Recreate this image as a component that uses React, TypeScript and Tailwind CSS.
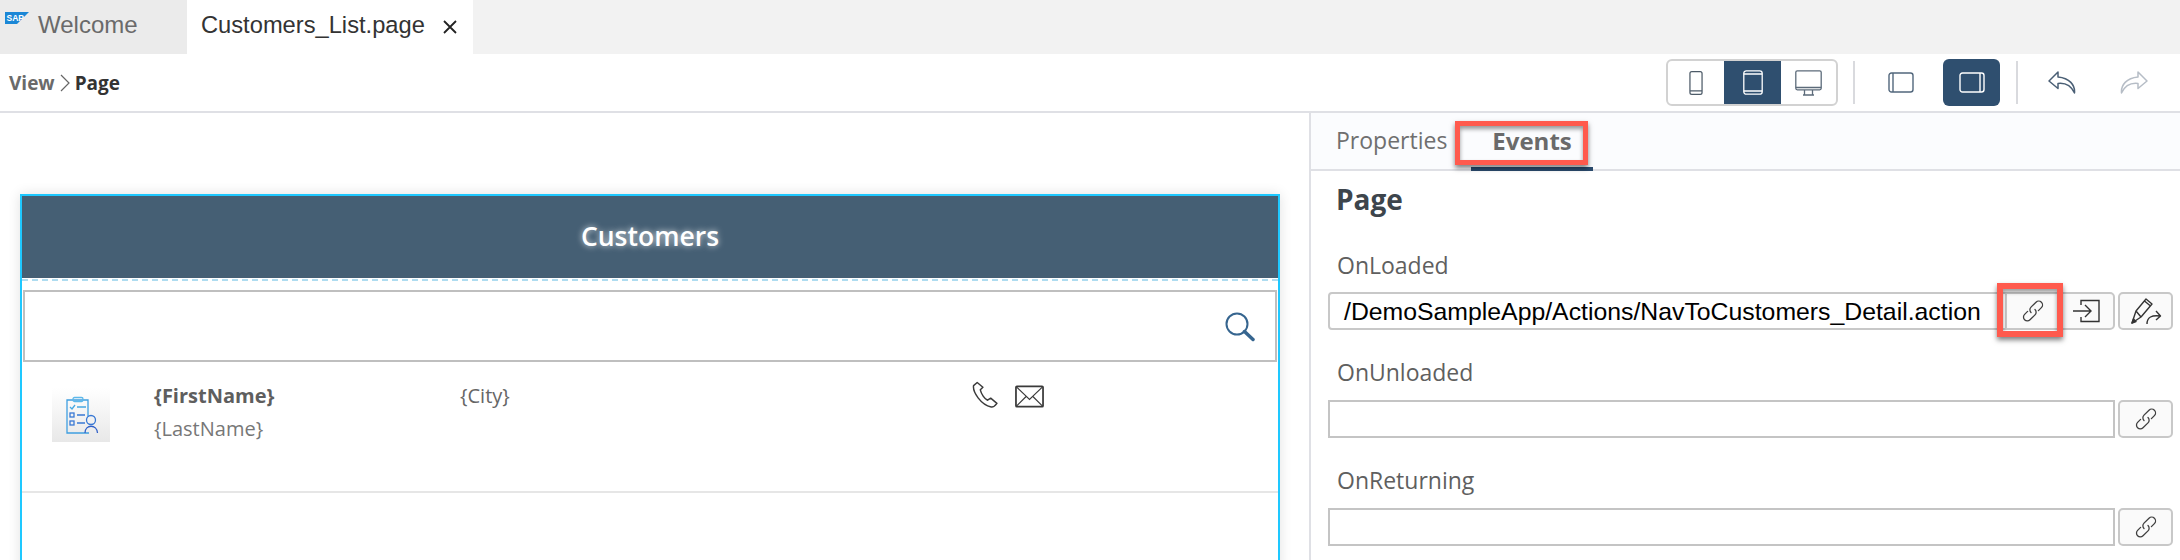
const navy = '#2f4f6f'

function Phone() {
  return (
    <svg viewBox="0 0 13 23" className="w-[14px] h-[24px]" fill="none" stroke="#4d5b68" strokeWidth="1.200" strokeLinejoin="round">
      <rect x="0.700" y="0.700" width="11.600" height="21.600" rx="1.800" />
      <path d="M0.700 19h11.600" />
    </svg>
  )
}

function Tablet() {
  return (
    <svg viewBox="0 0 20 25" className="w-[20px] h-[25px]" fill="none" stroke="#fff" strokeWidth="1.300" strokeLinejoin="round">
      <rect x="0.800" y="0.800" width="18.400" height="23.400" rx="2.500" />
      <path d="M0.800 4h18.400M0.800 21h18.400" />
    </svg>
  )
}

function Desktop() {
  return (
    <svg viewBox="0 0 27 26" className="w-[27px] h-[26px]" fill="none" stroke="#5c6b7a" strokeWidth="1.300" strokeLinejoin="round">
      <rect x="0.800" y="0.800" width="25.400" height="19" rx="1.500" />
      <path d="M0.800 17.500h25.400M9.500 20v5h8v-5M8 25h11" />
    </svg>
  )
}

function PanelIcon({ side, color }: { side: 'left' | 'right'; color: string }) {
  return (
    <svg viewBox="0 0 26 21" className="w-[26px] h-[21px]" fill="none" stroke={color} strokeWidth="1.400">
      <rect x="1" y="1" width="24" height="19" rx="2.500" />
      {side === 'left' ? <path d="M5 1v19" /> : <path d="M21 1v19" />}
    </svg>
  )
}

function Arrow({ flip, color }: { flip?: boolean; color: string }) {
  return (
    <svg viewBox="0 0 28 23" className={flip ? 'w-[28px] h-[23px] -scale-x-100' : 'w-[28px] h-[23px]'} fill="none" stroke={color} strokeWidth="1.500" strokeLinejoin="round">
      <path d="M10 1 1 10l9 7.500v-5c7-.8 13 2 16.500 9.500 .7-8-5-15-16.500-16z" />
    </svg>
  )
}

function Link() {
  return (
    <svg viewBox="0 0 26 26" className="w-[26px] h-[26px]" fill="none" stroke="#3f3f3f" strokeWidth="1.300" strokeLinecap="round">
      <path d="M11 14.500a3.800 3.800 0 0 1 0-5.400L16 4.200a3.800 3.800 0 0 1 5.400 5.400l-3 3" />
      <path d="M15 11.500a3.800 3.800 0 0 1 0 5.400L10 21.800a3.800 3.800 0 0 1-5.400-5.400l3-3" />
    </svg>
  )
}

function LinkButton({ className }: { className: string }) {
  return (
    <div className={`flex items-center justify-center h-[38px] border-2 border-[#c8c8c8] bg-[#fafafa] ${className}`}>
      <Link />
    </div>
  )
}

function EmptyField({ label }: { label: string }) {
  return (
    <div className="mt-[28px]">
      <div className="pl-[9px] text-[23px] leading-[28px] text-[#5f5f5f] mb-[14px]">{label}</div>
      <div className="flex gap-[3px] pr-[7px]">
        <div className="flex-1 h-[38px] border-2 border-[#c4c4c4] bg-white" />
        <LinkButton className="w-[55px] rounded-[5px]" />
      </div>
    </div>
  )
}

export default function App() {
  return (
    <div className="relative w-[2180px] h-[560px] overflow-hidden bg-white flex flex-col font-['Open_Sans',sans-serif]">
      {/* Tabs */}
      <div className="flex h-[54px] shrink-0 bg-[#f2f2f2] font-['Liberation_Sans',sans-serif] text-[24px]">
        <div className="relative w-[187px] bg-[#ebebeb] pl-[38px] pt-[7px] text-[#6a6a6a]">
          <svg viewBox="0 0 24 12" className="absolute left-[5px] top-[12px] w-[24px] h-[12px]">
            <path d="M0 0h24L12 12H0z" fill="#1b87d6" />
            <text x="1.500" y="9" fontSize="8.500" fontWeight="700" fill="#fff" fontFamily="Liberation Sans">SAP</text>
          </svg>
          Welcome
        </div>
        <div className="flex w-[286px] bg-white pl-[14px] pt-[8px] text-[23.700px] text-[#333]">
          <span>Customers_List.page</span>
          <svg viewBox="0 0 14 14" className="w-[14px] h-[14px] ml-[18px] mt-[12px]" stroke="#222" strokeWidth="1.800">
            <path d="M1 1l12 12M13 1 1 13" />
          </svg>
        </div>
      </div>

      {/* Toolbar */}
      <div className="flex items-center h-[59px] shrink-0 border-b-2 border-[#dfe0e5] pl-[9px]">
        <div className="flex items-center mt-[1px] text-[19px] font-bold text-[#6a6a6a]">
          View
          <svg viewBox="0 0 10 18" className="w-[10px] h-[18px] mx-[5px]" fill="none" stroke="#666" strokeWidth="1.200"><path d="m1 1 8 8-8 8" /></svg>
          <span className="text-[#333]">Page</span>
        </div>
        <div className="flex items-center ml-auto">
          <div className="flex h-[47px] rounded-[6px] border-2 border-[#d2d2d2] overflow-hidden">
            <div className="flex items-center justify-center w-[56px]"><Phone /></div>
            <div className="flex items-center justify-center w-[57px] bg-[#2f4f6f]"><Tablet /></div>
            <div className="flex items-center justify-center w-[55px]"><Desktop /></div>
          </div>
          <div className="w-[2px] h-[43px] bg-[#d9dade] ml-[15px]" />
          <div className="flex items-center justify-center w-[57px] h-[47px] ml-[17px]"><PanelIcon side="left" color="#52677c" /></div>
          <div className="flex items-center justify-center w-[57px] h-[47px] ml-[14px] rounded-[6px]" style={{ backgroundColor: navy }}><PanelIcon side="right" color="#fff" /></div>
          <div className="w-[2px] h-[43px] bg-[#d9dade] ml-[16px]" />
          <div className="ml-[30px]"><Arrow color="#4a5f75" /></div>
          <div className="ml-[44px] mr-[32px]"><Arrow flip color="#b6bdc6" /></div>
        </div>
      </div>

      <div className="flex flex-1 min-h-0">
        {/* Canvas */}
        <div className="w-[1311px] shrink-0 border-r-2 border-[#dfe0e5] pl-[20px] pr-[29px] pt-[81px]">
          <div className="h-[400px] border-x-2 border-t-2 border-[#1ec8ff] shadow-[0_0_12px_rgba(0,0,0,0.12)]">
            <div className="flex items-center justify-center h-[82px] bg-[#455f74] text-[26.500px] font-semibold text-white [text-shadow:0_0_6px_rgba(255,255,255,0.8)]">Customers</div>
            <div className="border-t-2 border-dashed border-[#aedcf0] mt-[1px]" />
            <div className="flex items-center justify-end h-[72px] mx-[1px] mt-[9px] border-2 border-[#bfbfbf] pr-[20px]">
              <svg viewBox="0 0 30 30" className="w-[30px] h-[30px] mt-[1px]" fill="none" stroke="#36658f" strokeWidth="2">
                <circle cx="12" cy="12" r="10.500" />
                <path d="m19.500 19.500 8.500 8" strokeWidth="3.500" strokeLinecap="round" />
              </svg>
            </div>
            <div className="flex h-[131px] border-b-2 border-[#e6e6e6] pl-[30px] pt-[26px]">
              <div className="flex items-center justify-center w-[58px] h-[54px] bg-gradient-to-b from-white to-[#e8e8e8]">
                <svg viewBox="0 0 36 38" className="w-[36px] h-[38px]" fill="none" strokeWidth="1.300">
                  <path d="M25 20V4h-21v33h22" stroke="#3f9fe0" />
                  <rect x="10" y="1.500" width="10" height="4" rx="1.500" stroke="#5db8ea" />
                  <path d="m7 11 2 2 3-4M14 11h9" stroke="#45a8e2" />
                  <rect x="7" y="17" width="4" height="4" stroke="#3878d4" />
                  <rect x="7" y="25" width="4" height="4" stroke="#3878d4" />
                  <path d="M14 19h8M14 27h8" stroke="#3878d4" />
                  <circle cx="28" cy="24" r="4.500" stroke="#3878d4" />
                  <path d="M22 37c0-9 12-9 12.500 0" stroke="#3060c8" />
                </svg>
              </div>
              <div className="ml-[44px] w-[306px] text-[20px] leading-[33px] -mt-[9px]">
                <div className="font-bold text-[#5e5e5e]">{'{FirstName}'}</div>
                <div className="text-[#777]">{'{LastName}'}</div>
              </div>
              <div className="w-[512px] text-[20px] leading-[33px] -mt-[9px] text-[#666]">{'{City}'}</div>
              <svg viewBox="0 0 26 26" className="w-[27px] h-[27px] mt-[-7px]" fill="none" stroke="#3a3a3a" strokeWidth="1.400" strokeLinejoin="round">
                <path d="M5 1.500 1.500 4.500c-1 6 7 18.500 17 20.500 2 .3 4-1.500 5.500-3.500l-6-5-3 2c-3-1-6-6-7-10l2.500-2.500z" />
              </svg>
              <svg viewBox="0 0 30 23" className="w-[29px] h-[23px] ml-[16px] -mt-[3px]" fill="none" stroke="#3a3a3a">
                <rect x="1" y="1" width="28" height="21" rx="1" strokeWidth="1.800" />
                <path d="m1.500 1.500 13.500 13 13.500-13M1.500 21.500l10-10M28.500 21.500l-10-10" strokeWidth="1.200" />
              </svg>
            </div>
          </div>
        </div>

        {/* Events panel */}
        <div className="flex-1 min-w-0">
          <div className="relative flex h-[58px] border-b-2 border-[#dfe0e5] bg-[#fbfcfe] pl-[25px] pt-[10px] text-[23px]">
            <span className="text-[#6f6f6f]">Properties</span>
            <span className="ml-[45px] text-[24px] font-bold text-[#6a6a6a]">Events</span>
            <div className="absolute left-[160px] bottom-[-2px] w-[122px] h-[4px] bg-[#2a4a6d]" />
          </div>
          <div className="pl-[17px]">
            <div className="pl-[8px] pt-[6px] text-[28px] leading-[44px] font-bold text-[#3d454c]">Page</div>
            <div className="mt-[30px] pl-[9px] text-[23px] leading-[28px] text-[#5f5f5f] mb-[13px]">OnLoaded</div>
            <div className="flex pr-[7px]">
              <div className="flex-1 h-[38px] border-2 border-[#c8c8c8] rounded-l-[4px] pl-[14px] text-[24.800px] leading-[35px] text-black font-['Liberation_Sans',sans-serif] whitespace-nowrap overflow-hidden">/DemoSampleApp/Actions/NavToCustomers_Detail.action</div>
              <LinkButton className="w-[55px] -ml-[2px]" />
              <div className="flex items-center justify-center w-[57px] h-[38px] -ml-[2px] border-2 border-[#c8c8c8] rounded-r-[5px] bg-[#fafafa]">
                <svg viewBox="0 0 30 24" className="w-[30px] h-[24px]" fill="none" stroke="#333" strokeWidth="1.400">
                  <path d="M9 6V1.500h18v21H9V18M1 12h17M13 6l6 6-6 6" />
                </svg>
              </div>
              <div className="flex items-center justify-center w-[55px] h-[38px] ml-[3px] border-2 border-[#c8c8c8] rounded-[5px] bg-[#fafafa]">
                <svg viewBox="0 0 32 28" className="w-[32px] h-[28px]" fill="none" stroke="#333" strokeWidth="1.400" strokeLinejoin="round">
                  <path d="M2 26 6 14 16 2l6 5-11 13zM6 14l5 6M14.500 4l6 5" />
                  <path d="m2 26 4-1.500L3.500 22z" fill="#333" />
                  <path d="M17 27c0-7 5-9 13-8M26 14l4.500 5-4.500 4" />
                </svg>
              </div>
            </div>
            <EmptyField label="OnUnloaded" />
            <EmptyField label="OnReturning" />
          </div>
        </div>
      </div>

      {/* Callouts */}
      <div className="absolute left-[1455px] top-[121px] w-[133px] h-[44px] border-[5px] border-[#ff5a4d] shadow-[0_3px_5px_rgba(0,0,0,0.5),inset_0_3px_4px_rgba(0,0,0,0.4)]" />
      <div className="absolute left-[1997px] top-[283px] w-[66px] h-[54px] border-[6px] border-[#ff5a4d] shadow-[0_3px_5px_rgba(0,0,0,0.5),inset_0_3px_4px_rgba(0,0,0,0.4)]" />
    </div>
  )
}
